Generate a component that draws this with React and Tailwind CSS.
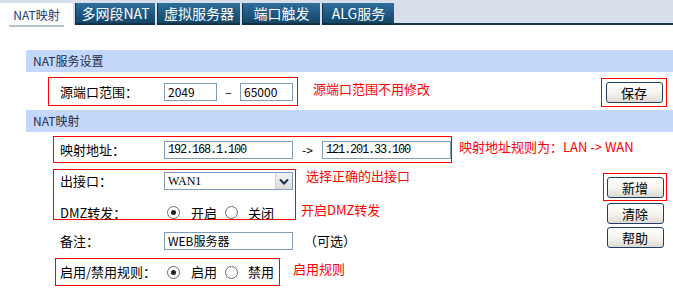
import React from 'react'

const Tab = ({ children, w }) => (
  <div
    className={`${w} h-full ml-[2px] flex items-center justify-center text-white text-[14px] bg-gradient-to-b from-[#2f6f9c] via-[#1f5a85] to-[#154766] border-l border-[#0f3550] border-b-2 border-b-[#133247]`}
  >
    {children}
  </div>
)

const Btn = ({ children }) => (
  <button className="w-[57px] h-[21px] border border-[#1d3f68] rounded-[3px] bg-gradient-to-b from-white via-[#f6f5f0] to-[#dcdad2] text-[13px] leading-none text-black">
    {children}
  </button>
)

const Input = ({ value, w = 'w-[129px]', mono }) => (
  <div
    className={`${w} h-[18px] border border-[#7f9db9] bg-white flex items-center pl-[3px] text-[12px] ${
      mono ? "font-['Liberation_Mono',monospace] tracking-[-1.2px]" : ''
    }`}
  >
    {value}
  </div>
)

const Radio = ({ on }) => (
  <span className="w-[13px] h-[13px] rounded-full border border-[#6b6b6b] bg-white flex items-center justify-center">
    {on && <span className="w-[5px] h-[5px] rounded-full bg-[#222]" />}
  </span>
)

const RadioPair = ({ a, b }) => (
  <div className="flex items-center">
    <Radio on />
    <span className="ml-[11px] w-[34px] text-[13px]">{a}</span>
    <Radio />
    <span className="ml-[10px] text-[13px]">{b}</span>
  </div>
)

const Header = ({ children }) => (
  <div className="h-[22px] bg-[#c4d8fc] flex items-center pl-[7px] text-[12px] text-[#1e2d4a]">
    {children}
  </div>
)

const Note = ({ children, className = '' }) => (
  <span className={`text-[13px] text-[#ff0000] whitespace-nowrap ${className}`}>{children}</span>
)

export default function App() {
  return (
    <div className="w-[673px] h-[292px] bg-white overflow-hidden font-['Noto_Sans_CJK_SC',sans-serif] text-[12px] text-black">
      {/* tabs */}
      <div className="h-[25px] pt-[3px] bg-[#d9dfea] flex">
        <div className="w-[73px] h-full bg-white flex items-start justify-center">
          <span className="mt-[3px] px-[4px] pb-[1px] border-b-2 border-[#b9c2c9] text-[12px] text-[#1a3a78]">
            NAT映射
          </span>
        </div>
        <Tab w="w-[80px]">多网段NAT</Tab>
        <Tab w="w-[83px]">虚拟服务器</Tab>
        <Tab w="w-[78px]">端口触发</Tab>
        <Tab w="w-[72px]">ALG服务</Tab>
        <div className="flex-1 h-full border-b-2 border-[#163447]" />
      </div>

      <div className="ml-[26px] mt-[25px]">
        <Header>NAT服务设置</Header>

        <div className="h-[38px] flex items-start">
          <div className="ml-[22px] mt-[5px] w-[250px] h-[29px] border border-[#ff0000] flex items-center pl-[11px]">
            <span className="w-[104px] text-[13px]">源端口范围：</span>
            <Input value="2049" w="w-[53px]" />
            <span className="w-[23px] text-center">–</span>
            <Input value="65000" w="w-[53px]" />
          </div>
          <Note className="ml-[15px] mt-[7px]">源端口范围不用修改</Note>
          <div className="ml-auto mr-[6px] mt-[6px] w-[66px] h-[29px] border border-[#ff0000] flex items-center justify-center">
            <Btn>保存</Btn>
          </div>
        </div>

        <Header>NAT映射</Header>

        <div className="flex">
          <div className="flex-1 min-w-0 flex flex-col">
            <div className="mt-[4px] flex items-start">
              <div className="ml-[27px] w-[403px] h-[27px] border border-[#ff0000] flex items-center pl-[6px]">
                <span className="w-[104px] text-[13px]">映射地址：</span>
                <Input value="192.168.1.100" mono />
                <span className="w-[29px] text-center">-&gt;</span>
                <Input value="121.201.33.100" mono />
              </div>
              <Note className="ml-[7px] mt-[1px]">映射地址规则为：LAN -&gt; WAN</Note>
            </div>

            <div className="mt-[6px] flex items-start">
              <div className="ml-[27px] w-[243px] h-[51px] border border-[#ff0000] flex flex-col pl-[6px] pt-[2px]">
                <div className="flex items-center h-[18px]">
                  <span className="w-[104px] text-[13px]">出接口：</span>
                  <div className="w-[129px] h-[18px] border border-[#7f9db9] flex items-center">
                    <span className="flex-1 pl-[3px] font-['Liberation_Serif',serif] text-[12px]">WAN1</span>
                    <span className="w-[17px] h-[16px] border-l border-[#c3d3fd] bg-gradient-to-b from-[#f4f4f4] to-[#dcdcdc] flex items-center justify-center">
                      <svg width="10" height="7" viewBox="0 0 10 7">
                        <path d="M1 1.5 L5 5.5 L9 1.5" fill="none" stroke="#1f2f4f" strokeWidth="2" />
                      </svg>
                    </span>
                  </div>
                </div>
                <div className="flex items-center mt-[13px]">
                  <span className="w-[107px] text-[13px]">DMZ转发：</span>
                  <RadioPair a="开启" b="关闭" />
                </div>
              </div>
              <div className="flex flex-col">
                <Note className="ml-[10px] -mt-[3px]">选择正确的出接口</Note>
                <Note className="ml-[5px] mt-[14px]">开启DMZ转发</Note>
              </div>
            </div>

            <div className="mt-[12px] ml-[34px] flex items-center h-[18px]">
              <span className="w-[104px] text-[13px]">备注：</span>
              <Input value="WEB服务器" />
              <span className="ml-[11px] text-[13px]">（可选）</span>
            </div>

            <div className="mt-[8px] flex items-start">
              <div className="ml-[29px] w-[225px] h-[28px] border border-[#ff0000] flex items-center pl-[4px]">
                <span className="w-[107px] text-[13px]">启用/禁用规则：</span>
                <RadioPair a="启用" b="禁用" />
              </div>
              <Note className="ml-[13px] mt-[1px]">启用规则</Note>
            </div>
          </div>

          <div className="shrink-0 mr-[6px] mt-[41px] flex flex-col items-center w-[64px]">
            <div className="w-[64px] h-[28px] border border-[#ff0000] flex items-center justify-center">
              <Btn>新增</Btn>
            </div>
            <div className="mt-[2px]">
              <Btn>清除</Btn>
            </div>
            <div className="mt-[3px]">
              <Btn>帮助</Btn>
            </div>
          </div>
        </div>
      </div>
    </div>
  )
}
